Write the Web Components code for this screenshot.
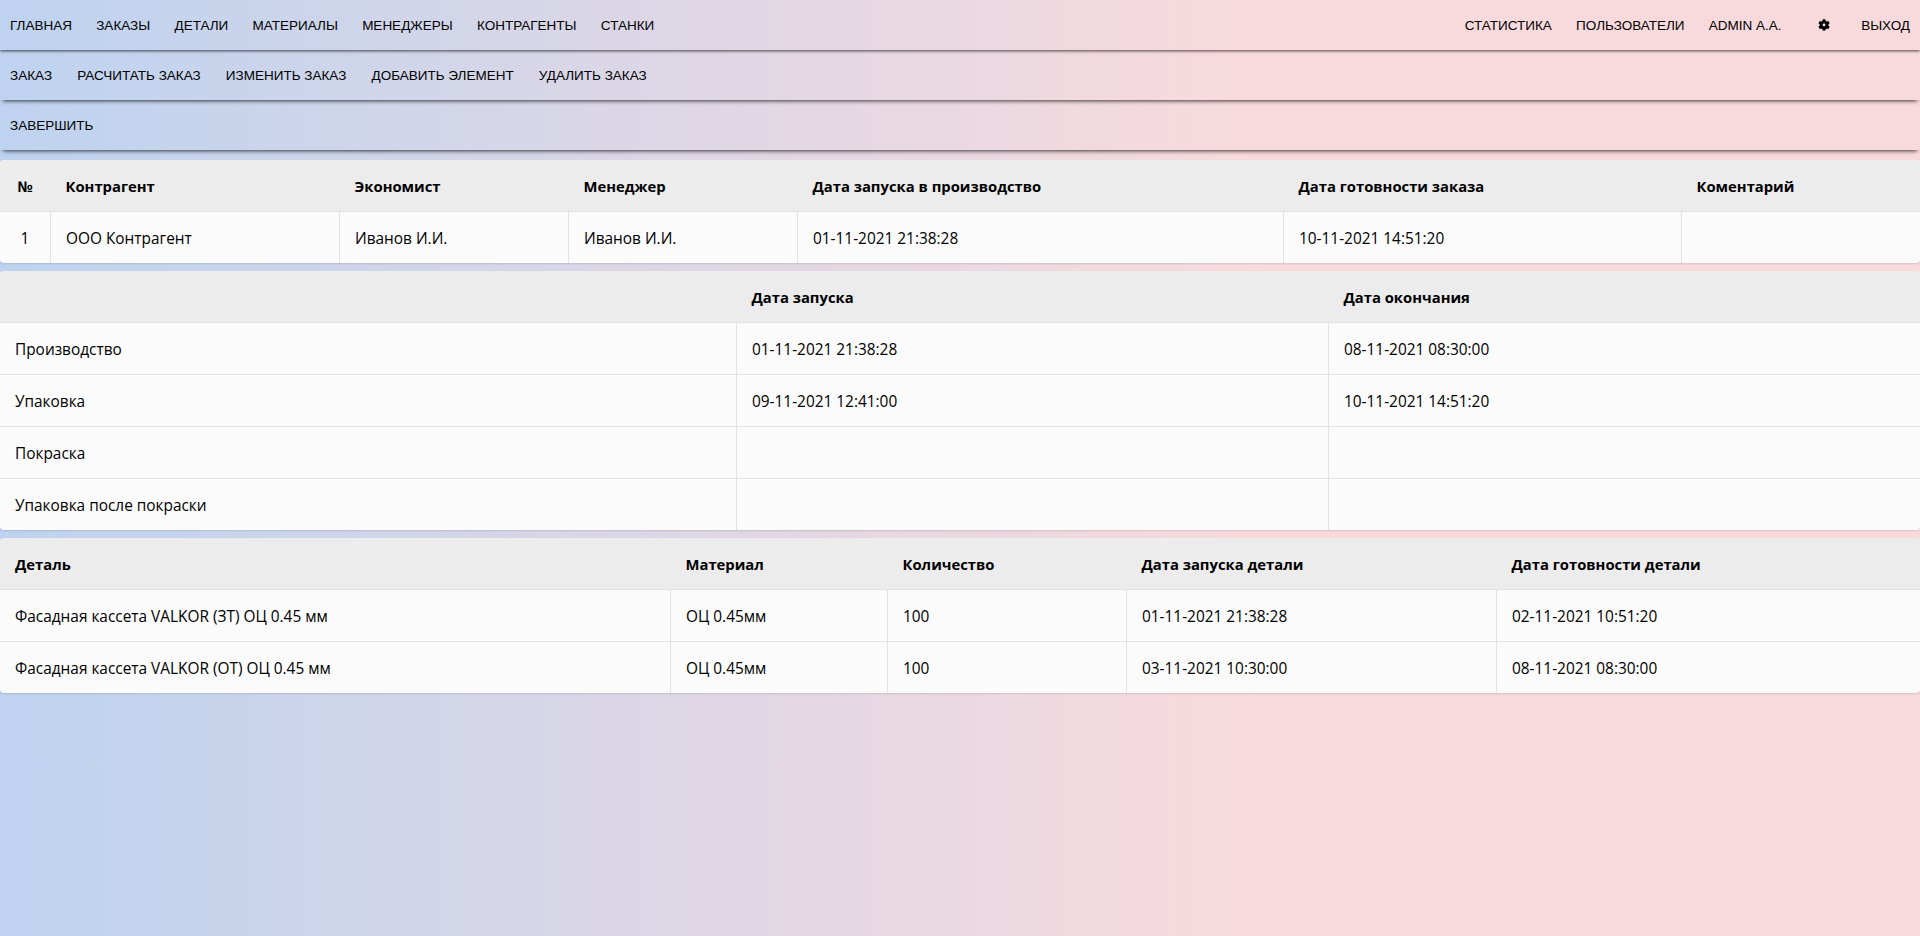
<!DOCTYPE html>
<html lang="ru">
<head>
<meta charset="utf-8">
<title>Заказ</title>
<style>
  html, body { height: 100%; }
  body {
    margin: 0;
    min-height: 936px;
    background: linear-gradient(90deg, #bed3f0 0%, #f9dadc 66%, #f9dadc 100%);
    font-family: "Open Sans", sans-serif;
    overflow: hidden;
  }
  nav-bar[wide] { --link-pad: 12.15px; }
  nav-bar.actions { --link-pad: 12.6px; }
  .tables { display: flex; flex-direction: column; gap: 8px; padding-top: 10px; }
</style>
</head>
<body>
  <nav-bar wide>
    <nav-link>Главная</nav-link>
    <nav-link>Заказы</nav-link>
    <nav-link>Детали</nav-link>
    <nav-link>Материалы</nav-link>
    <nav-link>Менеджеры</nav-link>
    <nav-link>Контрагенты</nav-link>
    <nav-link>Станки</nav-link>
    <nav-link slot="right">Статистика</nav-link>
    <nav-link slot="right">Пользователи</nav-link>
    <nav-link slot="right">Admin А.А.</nav-link>
    <nav-link slot="right"><gear-icon></gear-icon></nav-link>
    <nav-link slot="right">Выход</nav-link>
  </nav-bar>
  <nav-bar class="actions">
    <nav-link>Заказ</nav-link>
    <nav-link>Расчитать заказ</nav-link>
    <nav-link>Изменить заказ</nav-link>
    <nav-link>Добавить элемент</nav-link>
    <nav-link>Удалить заказ</nav-link>
  </nav-bar>
  <nav-bar>
    <nav-link>Завершить</nav-link>
  </nav-bar>

  <div class="tables">
    <data-table cols="50px 289px 229px 229px 486px 398px 239px">
      <table-row head>
        <table-cell center>№</table-cell><table-cell>Контрагент</table-cell><table-cell>Экономист</table-cell><table-cell>Менеджер</table-cell><table-cell>Дата запуска в производство</table-cell><table-cell>Дата готовности заказа</table-cell><table-cell>Коментарий</table-cell>
      </table-row>
      <table-row>
        <table-cell center>1</table-cell><table-cell>ООО Контрагент</table-cell><table-cell>Иванов И.И.</table-cell><table-cell>Иванов И.И.</table-cell><table-cell>01-11-2021 21:38:28</table-cell><table-cell>10-11-2021 14:51:20</table-cell><table-cell></table-cell>
      </table-row>
    </data-table>

    <data-table cols="736px 592px 592px">
      <table-row head>
        <table-cell></table-cell><table-cell>Дата запуска</table-cell><table-cell>Дата окончания</table-cell>
      </table-row>
      <table-row>
        <table-cell>Производство</table-cell><table-cell>01-11-2021 21:38:28</table-cell><table-cell>08-11-2021 08:30:00</table-cell>
      </table-row>
      <table-row>
        <table-cell>Упаковка</table-cell><table-cell>09-11-2021 12:41:00</table-cell><table-cell>10-11-2021 14:51:20</table-cell>
      </table-row>
      <table-row>
        <table-cell>Покраска</table-cell><table-cell></table-cell><table-cell></table-cell>
      </table-row>
      <table-row>
        <table-cell>Упаковка после покраски</table-cell><table-cell></table-cell><table-cell></table-cell>
      </table-row>
    </data-table>

    <data-table cols="670px 217px 239px 370px 424px">
      <table-row head>
        <table-cell>Деталь</table-cell><table-cell>Материал</table-cell><table-cell>Количество</table-cell><table-cell>Дата запуска детали</table-cell><table-cell>Дата готовности детали</table-cell>
      </table-row>
      <table-row>
        <table-cell>Фасадная кассета VALKOR (ЗТ) ОЦ 0.45 мм</table-cell><table-cell>ОЦ 0.45мм</table-cell><table-cell>100</table-cell><table-cell>01-11-2021 21:38:28</table-cell><table-cell>02-11-2021 10:51:20</table-cell>
      </table-row>
      <table-row>
        <table-cell>Фасадная кассета VALKOR (ОТ) ОЦ 0.45 мм</table-cell><table-cell>ОЦ 0.45мм</table-cell><table-cell>100</table-cell><table-cell>03-11-2021 10:30:00</table-cell><table-cell>08-11-2021 08:30:00</table-cell>
      </table-row>
    </data-table>
  </div>

<script>
class NavBar extends HTMLElement {
  constructor() {
    super();
    this.attachShadow({ mode: 'open' });
    this.shadowRoot.innerHTML = `
      <style>
        :host {
          display: flex;
          justify-content: space-between;
          align-items: center;
          height: 50px;
          padding-top: 2px;
          box-sizing: border-box;
          box-shadow: 0 4px 4px -3px rgba(0, 0, 0, .75);
          font: 13.5px/1 "Liberation Sans", Arial, sans-serif;
          color: #000;
        }
        :host([wide]) { box-shadow: 0 1px 3px rgba(0, 0, 0, .7); }
        .side { display: flex; align-items: center; }
      </style>
      <div class="side"><slot></slot></div>
      <div class="side"><slot name="right"></slot></div>
    `;
  }
}

class NavLink extends HTMLElement {
  constructor() {
    super();
    this.attachShadow({ mode: 'open' });
    this.shadowRoot.innerHTML = `
      <style>
        :host {
          display: block;
          padding: 0 var(--link-pad, 12.3px);
          text-transform: uppercase;
          white-space: nowrap;
          cursor: pointer;
        }
        :host(:first-child) { padding-left: 10px; }
        :host(:last-child) { padding-right: 10px; }
      </style>
      <slot></slot>
    `;
  }
}

class GearIcon extends HTMLElement {
  constructor() {
    super();
    this.attachShadow({ mode: 'open' });
    this.shadowRoot.innerHTML = `
      <style>
        :host { display: block; width: 12px; height: 12px; margin: -3px 7px 0 12px; }
        svg { display: block; width: 100%; height: 100%; }
      </style>
      <svg viewBox="0 0 512 512"><path fill="#000" d="M487 316l-42-25c4-23 4-47 0-70l42-25c5-3 7-9 5-14-11-35-29-66-54-93-4-4-10-5-14-2l-42 25c-18-15-39-27-61-35V28c0-6-4-10-9-11-36-8-73-8-107 0-5 1-9 5-9 11v49c-22 8-43 20-61 35L93 87c-5-3-11-2-14 2-25 27-43 58-54 93-2 5 0 11 5 14l42 25c-4 23-4 47 0 70l-42 25c-5 3-7 9-5 14 11 35 29 66 54 93 4 4 10 5 14 2l42-25c18 15 39 27 61 35v49c0 6 4 10 9 11 36 8 73 8 107 0 5-1 9-5 9-11v-49c22-8 43-20 61-35l42 25c5 3 11 2 14-2 25-27 43-58 54-93 2-5 0-11-5-14zM256 316c-33 0-60-27-60-60s27-60 60-60 60 27 60 60-27 60-60 60z"/></svg>
    `;
  }
}

class DataTable extends HTMLElement {
  constructor() {
    super();
    this.attachShadow({ mode: 'open' });
    this.shadowRoot.innerHTML = `
      <style>
        :host {
          display: block;
          border-radius: 4px;
          overflow: hidden;
          background: #fbfbfb;
          box-shadow: 0 1px 2px rgba(0, 0, 0, .12);
          font: 15.4px/20px "Open Sans", sans-serif;
          color: #000;
        }
      </style>
      <slot></slot>
    `;
  }
  connectedCallback() {
    this.style.setProperty('--cols', this.getAttribute('cols'));
  }
}

class TableRow extends HTMLElement {
  constructor() {
    super();
    this.attachShadow({ mode: 'open' });
    this.shadowRoot.innerHTML = `
      <style>
        :host {
          display: grid;
          grid-template-columns: var(--cols);
          height: 52px;
          box-sizing: border-box;
          border-top: 1px solid #e2e2e2;
        }
        :host([head]) {
          height: 51px;
          border-top: 0;
          background: #ececec;
          font-weight: 700;
          font-size: 14.8px;
          --cell-top: 0px;
          --cell-left: 14.5px;
          --cell-line: transparent;
        }
      </style>
      <slot></slot>
    `;
  }
}

class TableCell extends HTMLElement {
  constructor() {
    super();
    this.attachShadow({ mode: 'open' });
    this.shadowRoot.innerHTML = `
      <style>
        :host {
          display: flex;
          align-items: center;
          box-sizing: border-box;
          padding: var(--cell-top, 2px) 15px 0 var(--cell-left, 15px);
          border-left: 1px solid var(--cell-line, #e2e2e2);
          min-width: 0;
          white-space: nowrap;
        }
        :host(:first-child) { border-left: 0; padding-left: 15px; }
        :host([center]) { justify-content: center; padding-left: 0; padding-right: 0; }
      </style>
      <slot></slot>
    `;
  }
}

customElements.define('nav-bar', NavBar);
customElements.define('nav-link', NavLink);
customElements.define('gear-icon', GearIcon);
customElements.define('data-table', DataTable);
customElements.define('table-row', TableRow);
customElements.define('table-cell', TableCell);
</script>
</body>
</html>
